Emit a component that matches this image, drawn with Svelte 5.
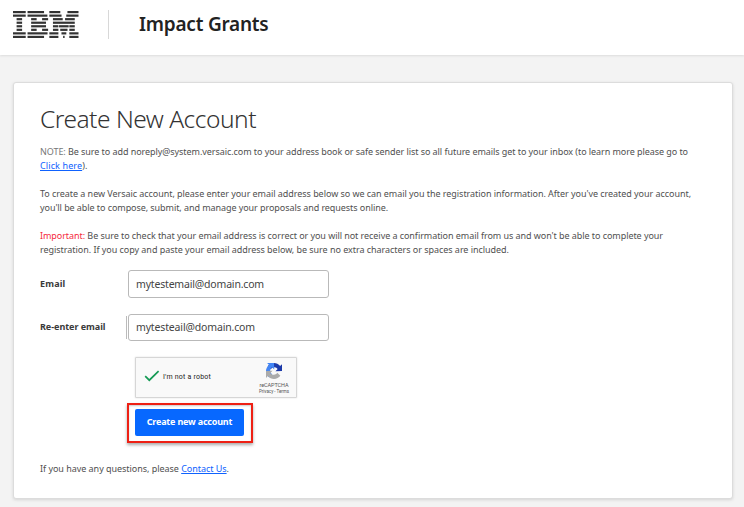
<script>
  // Eight-bar logotype: [row, x1, x2]
  const bars = [
    [0,0,194],[1,0,194],[2,55,139],[3,55,139],[4,55,139],[5,55,139],[6,0,194],[7,0,194],
    [0,222,474],[1,222,525],[2,277,361],[2,444,536],[3,277,504],[4,277,504],[5,277,361],[5,444,536],[6,222,527],[7,222,474],
    [0,555,722],[0,831,1000],[1,555,741],[1,813,1000],[2,610,759],[2,795,943],[3,610,943],
    [4,610,693],[4,703,850],[4,860,943],[5,610,693],[5,721,832],[5,860,943],
    [6,555,693],[6,740,814],[6,860,1000],[7,555,693],[7,765,788],[7,860,1000]
  ];

  // Tracks a line of text so that it spans the given width
  function fit(node, width) {
    const apply = () => {
      node.style.letterSpacing = '0px';
      const natural = node.getBoundingClientRect().width;
      node.style.letterSpacing = `${(width - natural) / node.textContent.length}px`;
    };
    apply();
    document.fonts.ready.then(apply);
  }
</script>

<div class="page">
  <header>
    <svg class="logo" viewBox="0 0 1000 406" preserveAspectRatio="none" aria-label="IBM">
      {#each bars as [row, x1, x2]}
        <rect x={x1} y={row * 53.3} width={x2 - x1} height="33" />
      {/each}
    </svg>
    <div class="divider"></div>
    <div class="product"><span use:fit={129.5}>Impact Grants</span></div>
  </header>

  <main>
    <h1><span use:fit={216}>Create New Account</span></h1>
    <p>
      <span class="line" use:fit={648}><span class="note">NOTE:</span> Be sure to add noreply@system.versaic.com to your address book or safe sender list so all future emails get to your inbox (to learn more please go to</span>
      <span class="line" use:fit={47.5}><a href="#help">Click here</a>).</span>
    </p>
    <p>
      <span class="line" use:fit={651}>To create a new Versaic account, please enter your email address below so we can email you the registration information. After you've created your account,</span>
      <span class="line" use:fit={348}>you'll be able to compose, submit, and manage your proposals and requests online.</span>
    </p>
    <p>
      <span class="line" use:fit={623}><span class="important">Important:</span> Be sure to check that your email address is correct or you will not receive a confirmation email from us and won't be able to complete your</span>
      <span class="line" use:fit={469}>registration. If you copy and paste your email address below, be sure no extra characters or spaces are included.</span>
    </p>

    <div class="row first">
      <label for="email"><span use:fit={25.5}>Email</span></label>
      <div class="field" id="email"><span use:fit={128}>mytestemail@domain.com</span></div>
    </div>
    <div class="row second">
      <label for="confirm"><span use:fit={65.5}>Re-enter email</span></label>
      <div class="field caret" id="confirm"><span use:fit={119}>mytesteail@domain.com</span></div>
    </div>

    <div class="captcha">
      <svg class="check" viewBox="0 0 16 12"><path d="M1.2 6.2 5.3 10.2 14.6 1.2" fill="none" stroke="#159a55" stroke-width="1.7" /></svg>
      <span class="robot"><span use:fit={48}>I'm not a robot</span></span>
      <div class="brand">
        <svg viewBox="0 0 64 64">
          <path d="M64 31.9V4.5l-7.6 7.6C50.200 4.700 41.700 0 32 0 21.500 0 12.500 5 6.500 12.800l12.400 12.500c1.200-2.200 2.900-4.200 5-5.600 2.100-1.700 5.200-3 9.300-3 .5 0 .9 0 1.200.2 5.100.4 9.600 3.200 12.200 7.400L37.900 33z" fill="#1c3aa9" />
          <path d="M31.900 0H4.500l7.600 7.600C4.700 13.800 0 22.300 0 32c0 10.500 5 19.500 12.800 25.500l12.500-12.400c-2.200-1.200-4.200-2.900-5.600-5-1.700-2.100-3-5.200-3-9.300 0-.5 0-.9.2-1.200.4-5.100 3.200-9.600 7.400-12.200L33 26.100z" fill="#4285f4" />
          <path d="M0 32.100v27.400l7.600-7.600C13.800 59.300 22.300 64 32 64c10.500 0 19.500-5 25.500-12.800L45.100 38.700c-1.200 2.200-2.900 4.200-5 5.600-2.100 1.700-5.200 3-9.300 3-.5 0-.9 0-1.200-.2-5.100-.4-9.600-3.200-12.200-7.400L26.100 31z" fill="#ababab" />
        </svg>
        <span class="name"><span use:fit={29}>reCAPTCHA</span></span>
        <span class="terms"><span use:fit={30}>Privacy - Terms</span></span>
      </div>
    </div>

    <div class="highlight">
      <button type="button"><span use:fit={85.5}>Create new account</span></button>
    </div>

    <footer><span use:fit={189}>If you have any questions, please <a href="#contact">Contact Us</a>.</span></footer>
  </main>
</div>

<style>
  :global(body) { margin: 0; background: #f3f3f3; }
  .page {
    height: 507px;
    overflow: hidden;
    box-sizing: border-box;
    background: #f3f3f3;
    font: 9px/14px "Noto Sans", "Open Sans", sans-serif;
    color: #505050;
    white-space: nowrap;
  }
  header {
    display: flex;
    height: 55px;
    background: #fff;
    box-shadow: 0 1px 2px #dcdcdc;
    box-sizing: border-box;
    padding: 10px 0 0 13px;
  }
  .logo { width: 65.500px; height: 27px; margin-top: 1px; fill: #333; }
  .divider { width: 1px; height: 29px; margin-left: 29.500px; background: #d8d8d8; }
  .product { margin-left: 30px; font-size: 19px; line-height: 28px; font-weight: 600; color: #222; }
  main {
    box-sizing: border-box;
    width: 720px;
    height: 417px;
    margin: 27px 0 0 13px;
    padding: 19px 0 0 26px;
    background: #fff;
    border: 1px solid #dcdcdc;
    border-radius: 3px;
    box-shadow: 0 1px 3px #d4d4d4;
  }
  h1 { margin: 0 0 10px; font-size: 24.500px; font-weight: 300; line-height: 33px; color: #333; }
  p { margin: 0 0 14px; }
  .line { display: table; }
  a { color: #0f62fe; text-decoration: underline; text-underline-offset: 1px; }
  .note { color: #777; }
  .important { color: #f5283c; }
  .row { display: flex; align-items: center; }
  .row.first { margin-top: -1px; }
  .row.second { margin-top: 16px; }
  label { width: 88px; font-weight: 700; color: #3a3a3a; }
  .second label { padding-bottom: 2px; }
  .field {
    position: relative;
    box-sizing: border-box;
    width: 201px;
    height: 28px;
    padding-left: 7px;
    border: 1px solid #b9b9b9;
    border-radius: 3px;
    font-size: 10.500px;
    line-height: 26px;
    color: #444;
  }
  .second .field { height: 27px; line-height: 25px; }
  .caret::before { content: ""; position: absolute; left: -3px; top: 1px; width: 1px; height: 23px; background: #bbb; }
  .captcha {
    display: flex;
    box-sizing: border-box;
    width: 162px;
    height: 41px;
    margin: 16px 0 0 95px;
    border: 1px solid #d6d6d6;
    border-radius: 1px;
    background: #f9f9f9;
    box-shadow: 0 0 2px #ddd;
    color: #222;
  }
  .check { width: 16px; height: 12px; margin: 12px 0 0 8px; }
  .robot { width: 93px; margin-left: 3px; font: 7px/39px Roboto, sans-serif; }
  .brand { display: flex; flex-direction: column; align-items: center; width: 36px; padding-top: 5px; color: #555; font-family: Roboto, sans-serif; }
  .brand svg { width: 16px; height: 16px; }
  .name { margin-top: 3px; font-size: 5.500px; line-height: 7px; }
  .terms { font-size: 4.500px; line-height: 6px; }
  .highlight {
    box-sizing: border-box;
    width: 126px;
    height: 40px;
    margin: 5px 0 0 87px;
    padding: 4px 0 0 6px;
    border: 2px solid #ee2014;
    box-shadow: 0 2px 3px #aaa, inset 0 1px 2px #ccc;
  }
  button {
    display: block;
    width: 109px;
    height: 27px;
    padding: 0 0 2px;
    border: 0;
    border-radius: 2px;
    background: #0768ff;
    color: #fff;
    font: 700 9px/25px "Noto Sans", sans-serif;
  }
  footer { margin-top: 19px; }
</style>
